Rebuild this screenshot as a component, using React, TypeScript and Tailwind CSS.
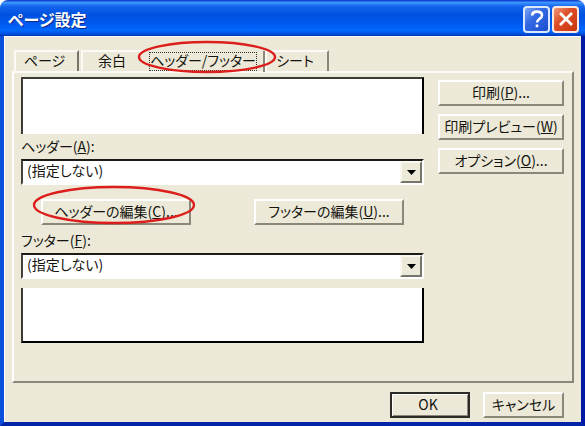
import type { ReactNode } from 'react';

const raised =
  'border-t-2 border-l-2 border-r-2 border-b-2 border-t-white border-l-white border-r-[#8a8678] border-b-[#8a8678] bg-[#ece9d8] pb-0.5 text-center leading-none whitespace-nowrap';

function PushButton({ children, className }: { children: ReactNode; className: string }) {
  return (
    <button type="button" className={`${raised} ${className}`}>
      {children}
    </button>
  );
}

function Ring({ className }: { className: string }) {
  return (
    <svg
      aria-hidden="true"
      viewBox="0 0 100 100"
      preserveAspectRatio="none"
      className={`pointer-events-none absolute z-10 overflow-visible ${className}`}
    >
      <ellipse
        cx="50"
        cy="50"
        rx="50"
        ry="50"
        fill="none"
        stroke="#dc1f1c"
        strokeWidth="2.4"
        vectorEffect="non-scaling-stroke"
      />
    </svg>
  );
}

function DropDown({ id, name, hotkey }: { id: string; name: string; hotkey: string }) {
  return (
    <div className="flex flex-col">
      <label htmlFor={id} className="h-6 leading-[22px]">
        {name}(<u>{hotkey}</u>):
      </label>
      <div className="relative">
        <select
          id={id}
          className="block h-[26px] w-full appearance-none rounded-none border-2 border-t-[#1c1b16] border-r-white border-b-white border-l-[#44423a] bg-white pb-1 pl-1 text-sm leading-[18px] outline-none"
        >
          <option>(指定しない)</option>
        </select>
        <span
          aria-hidden="true"
          className="pointer-events-none absolute top-0.5 right-0.5 flex h-[22px] w-[22px] items-center justify-center border-2 border-t-[#f8f7f0] border-r-[#77746a] border-b-[#77746a] border-l-[#f8f7f0] bg-[#ece9d8]"
        >
          <svg viewBox="0 0 9 5" className="h-[5px] w-[9px]">
            <path d="M0 0h9L4.5 5z" fill="#000" />
          </svg>
        </span>
      </div>
    </div>
  );
}

const tab = 'h-full border-t-2 border-l-2 border-t-[#fbfaf5] border-l-[#fbfaf5] pr-1 pb-1 leading-none';

export default function App() {
  return (
    <main className="w-full overflow-hidden rounded-t-lg bg-[#ece9d8] font-['Noto_Sans_CJK_JP','Liberation_Sans',sans-serif] text-sm text-[#15140f] [font-feature-settings:'palt']">
      <header className="flex h-9 items-center justify-between bg-[linear-gradient(180deg,#0831c8_0%,#3c96ff_7%,#1464ee_18%,#0052e0_40%,#0058ee_65%,#0068ff_85%,#0050dc_94%,#0036b4_100%)] pr-1.5 pl-2">
        <h1 className="pt-0.5 text-base font-bold text-white [text-shadow:1px_1px_0_#0a2a8a]">ページ設定</h1>
        <div className="flex gap-0.5 pt-0.5">
          <button
            type="button"
            aria-label="ヘルプ"
            className="flex h-[27px] w-[27px] items-center justify-center rounded border-2 border-[#dce8ff] bg-[linear-gradient(135deg,#7ba4f5,#3469e4_40%,#1b4ed0)]"
          >
            <svg viewBox="0 0 20 20" className="h-5 w-5" fill="none" stroke="#fff" strokeWidth="2.6">
              <path d="M5.2 6.500C5.200 3.800 7 2.600 10 2.600s5 1.300 5 3.800c0 3.200-5 3.500-5 7.200" />
              <path d="M10 15.500v2.800" />
            </svg>
          </button>
          <button
            type="button"
            aria-label="閉じる"
            className="flex h-[27px] w-[27px] items-center justify-center rounded border-2 border-[#ffe9df] bg-[linear-gradient(135deg,#f09a7c,#dd4f28_40%,#c8350f)]"
          >
            <svg viewBox="0 0 20 20" className="h-5 w-5" fill="none" stroke="#fff" strokeWidth="2.8">
              <path d="M4 4l12 12M16 4L4 16" />
            </svg>
          </button>
        </div>
      </header>

      <div className="border-r-4 border-b-4 border-l-4 border-r-[#0019a5] border-b-[#0424a8] border-l-[#0a50dc] pt-3.5 pr-[7px] pb-1 pl-2 shadow-[inset_1px_1px_0_#fff]">
        <div role="tablist" className="flex h-[21px] pl-0.5">
          <button type="button" role="tab" aria-selected="false" className={`${tab} w-[65px] border-r-2 border-r-[#77746a]`}>
            ページ
          </button>
          <button type="button" role="tab" aria-selected="false" className={`${tab} ml-0.5 w-[64px]`}>
            余白
          </button>
          <div className="relative h-full">
            <button
              type="button"
              role="tab"
              aria-selected="true"
              className="h-full w-[120px] border-r-2 border-r-[#8a8678] pr-1.5 pl-1 leading-none whitespace-nowrap"
            >
              <span className="flex h-[19px] items-center justify-center border border-dotted border-[#33322c] pb-0.5">
                ヘッダー/フッター
              </span>
            </button>
            <Ring className="-top-2 -left-1.5 h-[30px] w-[136px]" />
          </div>
          <button type="button" role="tab" aria-selected="false" className={`${tab} w-[64px] border-r-2 border-r-[#8a8678]`}>
            シート
          </button>
        </div>

        <section className="flex gap-3.5 border-2 border-t-[#fbfaf5] border-r-[#8a8678] border-b-[#8a8678] border-l-white pt-1 pr-2 pb-[38px] pl-[7px]">
          <div className="min-w-0 flex-1">
            <div className="h-[57px] border-t-2 border-r-2 border-l-2 border-t-[#3c3b35] border-r-black border-l-[#3c3b35] bg-white" />
            <div className="pt-[1px]">
              <DropDown id="header-text" name="ヘッダー" hotkey="A" />
            </div>
            <div className="flex justify-between pt-3.5 pr-5 pl-5">
              <div className="relative">
                <PushButton className="h-[26px] w-[150px]">
                  ヘッダーの編集(<u>C</u>)...
                </PushButton>
                <Ring className="-top-3 -left-[7px] h-9 w-[160px]" />
              </div>
              <PushButton className="h-[26px] w-[150px]">
                フッターの編集(<u>U</u>)...
              </PushButton>
            </div>
            <div className="pt-1">
              <DropDown id="footer-text" name="フッター" hotkey="F" />
            </div>
            <div className="mt-[9px] h-[55px] border-r-2 border-b-2 border-l-2 border-r-black border-b-black border-l-[#3c3b35] bg-white" />
          </div>
          <div className="flex w-[126px] shrink-0 flex-col gap-2 pt-[3px]">
            <PushButton className="h-[26px]">
              印刷(<u>P</u>)...
            </PushButton>
            <PushButton className="h-[26px]">
              印刷プレビュー(<u>W</u>)
            </PushButton>
            <PushButton className="h-[26px]">
              オプション(<u>O</u>)...
            </PushButton>
          </div>
        </section>

        <footer className="flex justify-end gap-[13px] pt-[9px] pr-2.5">
          <button
            type="button"
            className="h-[26px] w-20 border-2 border-[#2c2b25] bg-[#ece9d8] pr-1 pb-0.5 leading-none shadow-[inset_1px_1px_0_#fff,inset_-1px_-1px_0_#8a8678]"
          >
            OK
          </button>
          <PushButton className="h-[26px] w-[81px]">キャンセル</PushButton>
        </footer>
      </div>
    </main>
  );
}
